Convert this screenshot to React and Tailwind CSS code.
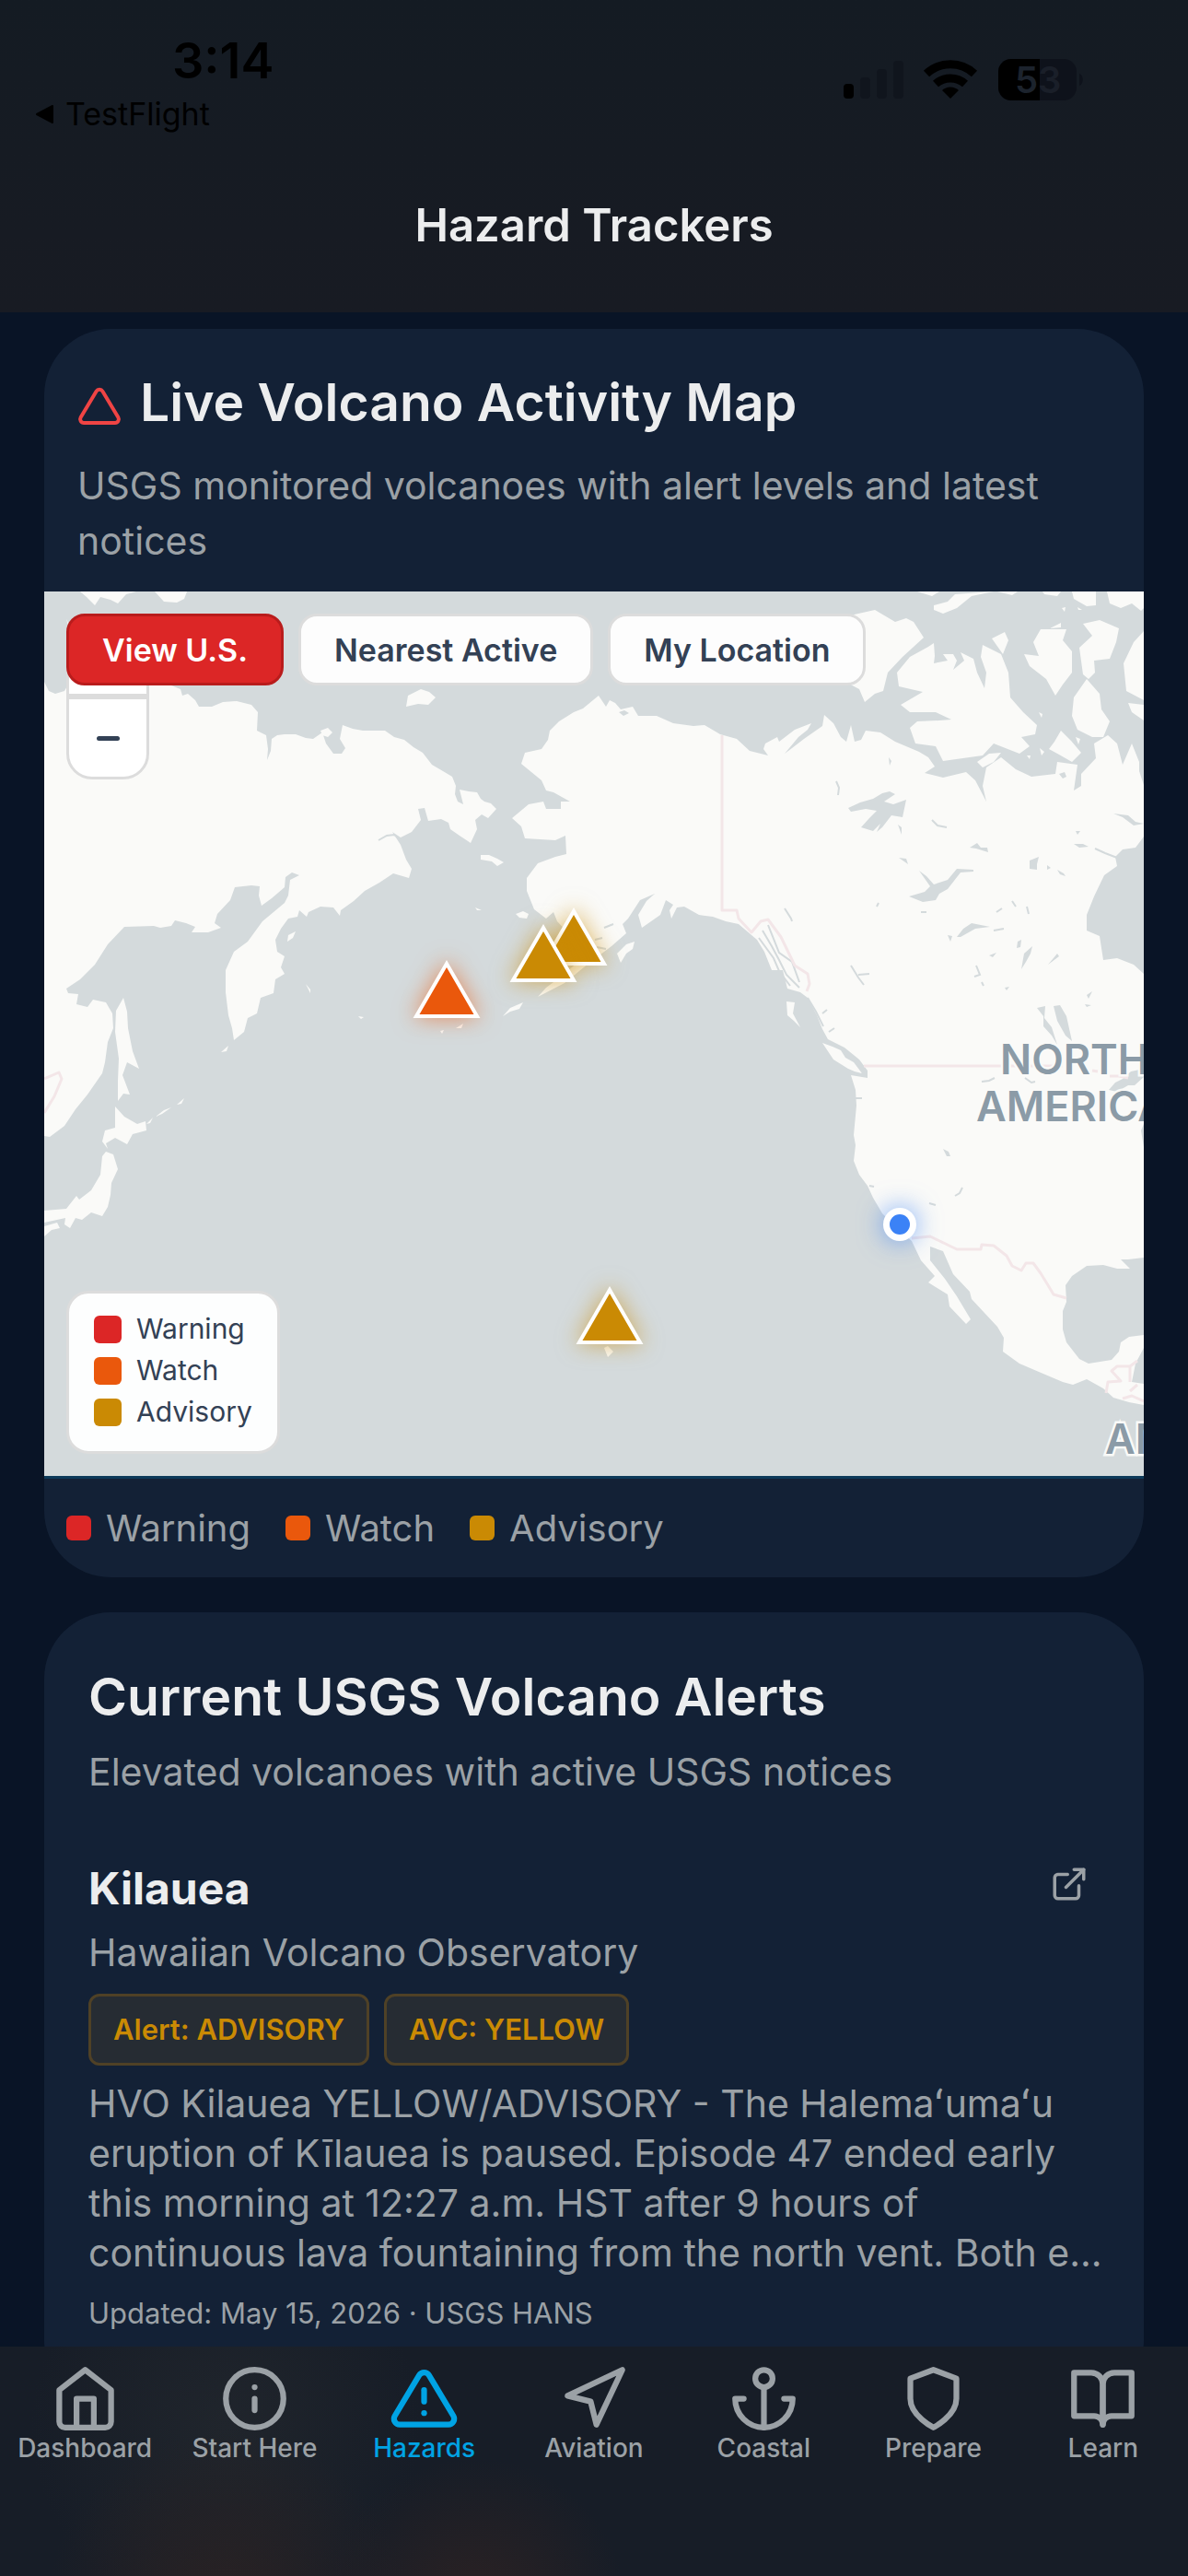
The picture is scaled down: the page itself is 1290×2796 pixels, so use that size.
import { useState } from "react";
import {
  FiAlertTriangle,
  FiAnchor,
  FiBookOpen,
  FiExternalLink,
  FiHome,
  FiInfo,
  FiNavigation,
  FiShield,
  FiTriangle,
} from "react-icons/fi";

const LEVELS = [
  { label: "Warning", swatch: "bg-[#dc2626]" },
  { label: "Watch", swatch: "bg-[#ea580c]" },
  { label: "Advisory", swatch: "bg-[#ca8a04]" },
];

const VIEWS = ["View U.S.", "Nearest Active", "My Location"];

const TABS = [
  { label: "Dashboard", icon: FiHome },
  { label: "Start Here", icon: FiInfo },
  { label: "Hazards", icon: FiAlertTriangle },
  { label: "Aviation", icon: FiNavigation },
  { label: "Coastal", icon: FiAnchor },
  { label: "Prepare", icon: FiShield },
  { label: "Learn", icon: FiBookOpen },
];

const VOLCANOES = [
  { id: "great-sitkin", x: 437, y: 399, fill: "#ea580c", glow: "drop-shadow-[0_0_12px_rgba(234,88,12,0.6)]" },
  { id: "spurr", x: 575, y: 342, fill: "#ca8a04", glow: "drop-shadow-[0_0_12px_rgba(202,138,4,0.6)]" },
  { id: "shishaldin", x: 542, y: 360, fill: "#ca8a04", glow: "drop-shadow-[0_0_12px_rgba(202,138,4,0.6)]" },
  { id: "kilauea", x: 614, y: 753, fill: "#ca8a04", glow: "drop-shadow-[0_0_12px_rgba(202,138,4,0.6)]" },
];

const LAND = [
  // Siberia and Kamchatka
  "M0 98 5 108 12 111 22 108 26 101 30 50 24 30 40 60 90 90 138 102 148 106 150 113 156 111 164 118 168 125 182 125 194 120 209 119 225 123 232 131 231 151 241 156 243 171 242 183 246 173 247 160 253 156 261 155 273 155 284 159 292 160 302 153 306 165 314 176 323 176 327 170 321 160 324 145 335 149 346 151 370 151 380 158 391 161 401 169 411 175 421 188 433 195 443 201 447 211 446 220 449 228 455 231 451 215 461 217 470 218 474 225 478 228 485 230 491 236 482 246 475 242 468 248 470 258 463 273 451 265 441 258 439 251 431 247 417 249 413 235 406 236 409 248 399 261 387 267 378 261 387 275 393 291 399 301 396 311 379 306 364 316 348 325 336 336 322 346 321 352 314 343 300 342 287 348 285 353 277 346 275 353 265 355 257 366 251 378 253 391 261 396 257 408 261 415 251 421 249 436 235 441 231 458 221 463 217 478 206 487 204 474 200 460 197 435 197 411 206 391 221 380 237 358 261 338 265 330 267 313 277 308 269 305 262 310 261 321 247 333 236 341 233 330 234 320 225 319 207 321 202 335 188 350 185 360 192 365 178 370 160 370 164 364 154 360 142 357 138 363 126 365 119 363 87 364 69 383 55 405 39 421 24 431 26 436 37 437 35 448 47 451 53 443 67 446 74 458 75 474 69 489 66 511 63 523 47 546 34 562 22 580 6 592 0 591Z",
  // Sakhalin, Hokkaido, Honshu, Shikoku
  "M78 455 86 441 90 456 91 474 96 499 103 518 90 511 85 525 93 546 86 545 80 553 80 531 81 507 77 478Z",
  "M77 559 87 570 101 578 110 575 111 585 96 589 90 600 77 593 67 599 69 605 63 597 66 585 77 582Z",
  "M67 608 75 611 80 627 73 642 72 655 69 668 63 678 51 674 41 682 34 680 28 691 22 687 23 680 0 685 0 672 24 670 35 656 38 660 51 650 61 633 63 613Z",
  "M0 689 14 685 17 691 8 693 0 700Z",
  "M192 500 200 493 198 499ZM111 578 118 571 115 577ZM121 570 130 563 138 560 128 567ZM144 557 152 550 149 556Z",
  // Arctic coast islands
  "M39 0 46 6 55 15 61 6 72 9 80 13 89 3 100 0ZM120 0 130 11 144 12 152 8 155 0Z",
  "M393 125 395 113 409 106 418 109 425 115 417 123 406 122ZM300 151 308 148 313 153 308 158 302 156Z",
  // Bering Sea islands
  "M474 286 483 286 492 290 499 294 492 298 486 293 474 291ZM512 350 520 347 526 350 524 355 516 354ZM265 373 273 369 270 376 264 380ZM284 426 289 432 289 436ZM341 461 347 462 344 464ZM468 343 475 346 470 346Z",
  "M498 461 506 452 520 446 516 453 506 456ZM447 474 455 469 453 474ZM430 477 434 476 432 480Z",
  // North America
  "M602 113 610 125 614 118 620 121 626 128 639 125 645 135 665 135 683 143 705 146 717 145 734 155 752 160 766 173 786 178 781 171 783 165 796 158 798 163 815 150 833 143 829 150 819 158 804 176 812 170 825 160 845 146 847 134 857 143 865 158 871 163 876 145 880 163 887 161 892 151 908 153 924 163 950 174 960 180 967 190 956 197 976 202 1001 196 1011 205 1023 228 1019 211 1023 191 1039 180 1055 193 1072 201 1098 198 1100 185 1122 188 1118 216 1126 211 1126 198 1142 181 1140 165 1155 156 1165 165 1171 188 1181 165 1189 185 1189 195 1194 210V266L1185 278 1171 280 1163 288 1165 298 1151 308 1140 331 1132 351 1132 368 1146 374 1150 400 1165 398 1183 405 1194 415V723L1177 725 1169 725 1179 735 1165 735 1150 731 1132 732 1116 743 1109 753 1110 771 1106 781 1106 801 1110 815 1124 833 1134 838 1159 834 1167 825 1169 815 1178 809 1194 807V821L1185 838 1181 858 1194 860V883L1178 880 1161 875 1150 865 1132 855 1117 861 1106 858 1080 847 1059 838 1041 825 1042 810 1035 798 1007 768 1005 760 987 741 976 716 962 711 962 726 978 746 991 765 1006 790 1001 795 983 776 981 763 960 750 967 743 952 726 942 705 925 690 910 675 900 658 894 645 885 633 879 618 881 601 879 590 882 558 881 541 876 525 894 528 894 520 885 508 869 495 851 486 845 475 839 460 829 441 821 435 807 431 802 411 790 411 782 391 774 378 754 361 740 358 726 353 711 351 695 342 687 343 681 355 679 346 683 340 675 335 669 351 649 365 645 351 654 336 663 328 647 335 634 355 628 361 632 371 616 385 592 403 565 425 536 440 545 430 557 421 585 398 573 375 557 358 553 348 545 355 532 345 524 325 524 311 536 295 555 288 567 285 566 265 555 270 522 268 518 255 508 246 526 231 542 228 545 236 561 236 561 228 571 228 553 218 545 216 540 205 518 187 522 175 540 171 547 161 549 151 559 141 575 131 585 127Z",
  // Banks and Victoria islands
  "M875 26 902 20 924 33 936 29 944 33 955 50 932 71 916 88 911 108 902 111 891 120 885 106 870 98Z",
  "M966 56 967 70 966 78 981 75 976 68 987 68 991 75 987 85 999 75 995 66 1009 73 1013 88 1021 105 1023 88 1017 71 1019 58 1039 68 1047 88 1049 115 1063 131 1078 145 1076 155 1061 158 1070 168 1059 176 1031 165 1019 178 976 184 968 168 946 165 940 148 948 141 972 140 985 139 968 131 940 131 930 123 954 109 928 103 926 88 940 71 960 60Z",
  "M1029 51 1043 44 1047 53 1041 68ZM1064 68 1080 70 1074 55 1082 41 1110 41 1106 53 1116 65 1116 88 1106 101 1098 113 1088 95 1070 81ZM1092 40 1104 34 1104 39Z",
  // Somerset, Boothia, King William
  "M1128 35 1146 31 1167 40 1164 55 1157 73 1140 75 1141 88 1134 95 1128 90 1124 61 1138 48ZM1132 95 1146 111 1148 128 1157 141 1150 158 1138 158 1122 150 1116 135 1118 115Z",
  "M1091 171 1097 163 1104 151 1115 162 1126 175 1116 185 1102 177ZM1194 43 1183 55 1172 78 1175 108 1194 118ZM1177 121 1194 123V140L1181 131Z",
  "M966 15 981 11 989 3 1031 0 1007 5 991 18 976 24 966 20ZM948 0H972L964 5ZM1035 0H1057L1051 4ZM1084 0H1104L1100 5 1086 3ZM1116 0H1142V15L1132 16 1118 8ZM1154 0H1194V18L1191 21 1181 13 1169 18 1157 13ZM1105 18 1109 17 1108 22ZM1122 17 1127 20 1123 20Z",
  "M1013 185 1026 176 1039 175 1031 185 1019 191ZM1080 131 1084 133 1083 137ZM1081 170 1086 174 1083 178ZM1067 178 1071 178 1070 182ZM1120 158 1125 160 1123 166Z",
  // Kodiak, Haida Gwaii, Vancouver Island, Hawaii
  "M622 393 632 383 641 380 639 388 632 393 626 403ZM806 445 815 446 813 458 821 473 814 466 807 460Z",
  "M845 490 856 494 865 498 870 506 879 511 888 523 880 521 873 518 857 508ZM608 821 612 819 618 825 612 831Z",
].join("");

const LAKES = [
  "M873 235 886 229 900 225 910 219 918 217 924 220 912 228 922 231 936 226 932 245 920 243 910 256 904 261 908 252 900 260 887 256 896 246 904 238 892 236 876 239Z",
  "M950 303 958 309 966 318 981 313 991 301 1009 302 1009 304 995 305 981 323 972 328 968 335 954 337 939 331 956 326 962 320Z",
  "M991 375 998 366 1007 360 1027 364 1011 366 995 375ZM1057 380 1061 378 1060 386 1056 387ZM1061 410 1064 393 1073 385 1071 393 1066 402ZM1090 405 1100 393 1102 396Z",
  "M1096 450 1103 449 1110 461 1116 488 1109 482 1100 466ZM1078 452 1087 450 1086 463 1094 473 1100 492 1094 482 1085 472 1085 461Z",
  "M1070 292 1080 288 1078 296 1078 302 1070 301ZM1089 297 1093 300 1089 302ZM1100 302 1107 306 1109 309 1103 307ZM928 289 936 290 938 296ZM927 253 931 256 931 264ZM917 180 920 184 918 189ZM1013 273 1017 278 1024 278 1025 283 1012 279 1005 278Z",
  "M1118 274 1128 274 1134 277 1124 278ZM1161 241 1177 243 1185 250 1194 252 1183 254 1171 245ZM1120 260 1125 260 1122 264ZM1132 438 1138 434 1134 442ZM1130 448 1137 449 1132 451ZM1043 430 1048 429 1045 433ZM981 373 986 374 984 380ZM1026 395 1034 392 1030 397Z",
  "M976 605 982 608 984 613 980 613ZM1156 541 1163 533 1171 529 1180 521 1194 518V527L1184 536 1177 536 1165 543ZM1191 585 1194 578V603ZM624 131 630 129 635 132 629 135ZM1102 198 1108 196 1110 201 1106 203Z",
].join("");

const STREAMS =
  "M860 206 863 213 862 221M964 248 970 254 980 256M1141 279 1152 284 1165 289M804 344 811 355 812 358M1051 336 1055 342M1067 342 1069 350M904 342 906 338M952 348 958 348M1034 348 1040 344M1031 368 1042 366M876 406 884 419 890 427M884 416 896 415M1012 406 1016 416 1010 418M1018 424 1020 428M780 368 790 385 798 400 806 416 820 430M776 376 792 398 798 412 810 428M786 362 798 392 812 402 820 424M829 441 838 456 846 472M845 458 850 454M852 478 858 474M1018 532 1026 531 1032 528M1065 528 1072 533 1076 532M989 656 994 653 997 647M961 664 968 666M608 365 618 361M598 378 606 376M600 386 610 388M888 550 880 550M896 645 901 646M363 270 372 265 380 264 388 270";

const BORDERS =
  "M736 156V346L752 346 754 355 768 370 778 358 786 356 800 375 815 406 829 415 831 426 828 434M890 515H1106M1138 520 1144 521M1157 526 1167 526 1177 528M942 702 962 700 991 714H1017L1018 709 1031 710 1045 721 1051 732 1061 737 1066 729H1074L1082 740 1090 753 1096 763 1110 767M1153 870 1155 858 1169 857 1159 846 1165 841H1179L1187 835M1179 841V858M1187 861 1179 868M1171 876 1181 873 1194 879M0 529 16 522 19 529 11 548 0 566";

function StatusIcons() {
  return (
    <svg viewBox="0 0 264 48" className="w-[264px] h-12" aria-hidden="true">
      <rect x="3" y="29" width="11" height="16" rx="4" fill="#000" />
      <g fill="#10151d">
        <rect x="21" y="22" width="11" height="23" rx="4" />
        <rect x="39" y="13" width="11" height="32" rx="4" />
        <rect x="57" y="4" width="11" height="41" rx="4" />
      </g>
      <g fill="none" stroke="#000" strokeWidth="9">
        <path d="M93 18a38 38 0 0 1 52 0" />
        <path d="M103 29a24 24 0 0 1 32 0" />
      </g>
      <path d="M119 45 110 36a13 13 0 0 1 18 0Z" fill="#000" />
      <rect x="171" y="2" width="85" height="45" rx="14" fill="#0e121b" />
      <path d="M216 2H185a14 14 0 0 0-14 14v17a14 14 0 0 0 14 14h31Z" fill="#000" />
      <path d="M259 18c5 2 5 11 0 13Z" fill="#0e121b" />
      <text x="189" y="39" className="font-semibold text-[40px]" fill="#1c232d">5</text>
      <text x="214" y="39" className="font-semibold text-[40px]" fill="#1a1f29">3</text>
    </svg>
  );
}

function MapCanvas() {
  return (
    <svg
      viewBox="0 0 1194 960"
      preserveAspectRatio="xMidYMid slice"
      className="block w-full h-[960px] bg-[#d4dadc]"
      role="img"
      aria-label="Map of monitored volcanoes"
    >
      <path d={LAND} fill="#fafaf8" />
      <path d={LAKES} fill="#d4dadc" />
      <path d={STREAMS} fill="none" stroke="#d4dadc" strokeWidth="2" />
      <path d={BORDERS} fill="none" stroke="#f3e6e8" strokeWidth="3" strokeLinejoin="round" />
      <g fill="#8b9ba7" stroke="#fafaf8" strokeWidth="5" paintOrder="stroke" className="text-[45px] font-semibold">
        <text x="1038" y="524">NORTH</text>
        <text x="1012" y="575">AMERICA</text>
        <text x="1152" y="936">AMERICA</text>
      </g>
      {VOLCANOES.map((v) => (
        <g key={v.id} className={v.glow}>
          <path
            d={`M${v.x} ${v.y + 5} ${v.x + 33} ${v.y + 62}H${v.x - 33}Z`}
            fill={v.fill}
            stroke="#fff"
            strokeWidth="4"
          />
        </g>
      ))}
      <g className="drop-shadow-[0_0_14px_rgba(59,130,246,0.7)]">
        <circle cx="929" cy="687" r="18" fill="#fff" />
        <circle cx="929" cy="687" r="11" fill="#3b82f6" />
      </g>
    </svg>
  );
}

function VolcanoMapCard() {
  const [view, setView] = useState("View U.S.");

  return (
    <section className="shrink-0 rounded-[72px] bg-[#132136] overflow-hidden">
      <div className="px-9 pt-11 pb-[25px]">
        <div className="flex items-center gap-5">
          <FiTriangle size={48} className="text-[#ef4444] mt-2" />
          <h2 className="text-[57px] leading-[72px] font-semibold text-[#ecedee]">Live Volcano Activity Map</h2>
        </div>
        <p className="mt-6 text-[41px] leading-[60px] text-[#9ba1a6]">
          USGS monitored volcanoes with alert levels and latest notices
        </p>
      </div>

      <div className="relative border-b-3 border-[#0c3a5a]">
        <MapCanvas />
        <div className="absolute left-6 top-6 w-[90px] h-[180px] rounded-[28px] overflow-hidden border-3 border-[#dcdcdc] bg-white flex flex-col">
          <button type="button" aria-label="Zoom in" className="h-[90px] border-b-6 border-[#dcdcdc] text-[#334155]" />
          <button type="button" aria-label="Zoom out" className="flex-1 flex items-center justify-center">
            <span className="w-[25px] h-[5px] rounded-full bg-[#334155]" />
          </button>
        </div>
        <div className="absolute left-6 top-6 flex gap-4">
          {VIEWS.map((v) => (
            <button
              key={v}
              type="button"
              onClick={() => setView(v)}
              className={`h-[78px] px-9 rounded-[20px] border-3 text-[34px] font-semibold whitespace-nowrap ${
                view === v
                  ? "bg-[#dc2626] border-[#b91c1c] text-white"
                  : "bg-[#fdfdfd] border-[#dcdcdc] text-[#334155]"
              }`}
            >
              {v}
            </button>
          ))}
        </div>
        <ul className="absolute left-6 bottom-6 rounded-[24px] border-3 border-[#dcdcdc] bg-[#fdfefe] px-[27px] pt-4 pb-5">
          {LEVELS.map((l) => (
            <li key={l.label} className="flex items-center gap-4 h-[45px] text-[30px] text-[#334155]">
              <span className={`w-[30px] h-[30px] rounded-md ${l.swatch}`} />
              {l.label}
            </li>
          ))}
        </ul>
      </div>

      <ul className="flex items-center gap-[38px] px-6 h-[107px]">
        {LEVELS.map((l) => (
          <li key={l.label} className="flex items-center gap-4 text-[40px] text-[#9ba1a6]">
            <span className={`w-[27px] h-[27px] rounded-md ${l.swatch}`} />
            {l.label}
          </li>
        ))}
      </ul>
    </section>
  );
}

function AlertBadge({ children }) {
  return (
    <span className="flex items-center h-[78px] px-6 rounded-xl border-3 border-[#4f4126] bg-[#262c33] text-[31px] font-semibold text-[#ca8a04]">
      {children}
    </span>
  );
}

function AlertsCard() {
  return (
    <section className="shrink-0 rounded-[72px] bg-[#132136] pl-12 pr-9 pt-14 pb-20">
      <h2 className="text-[57px] leading-[72px] font-semibold text-[#ecedee]">Current USGS Volcano Alerts</h2>
      <p className="mt-[18px] text-[41px] leading-[54px] text-[#9ba1a6]">Elevated volcanoes with active USGS notices</p>

      <article className="mt-[70px]">
        <div className="flex items-start justify-between pr-6">
          <h3 className="text-[48px] leading-[60px] font-bold text-[#ecedee]">Kilauea</h3>
          <a href="#kilauea" aria-label="Open the Kilauea notice" className="pt-1 text-[#9ba1a6]">
            <FiExternalLink size={42} />
          </a>
        </div>
        <p className="mt-3 text-[41px] leading-[54px] text-[#9ba1a6]">Hawaiian Volcano Observatory</p>
        <div className="mt-[18px] flex gap-4">
          <AlertBadge>Alert: ADVISORY</AlertBadge>
          <AlertBadge>AVC: YELLOW</AlertBadge>
        </div>
        <p className="mt-[14px] text-[41px] leading-[54px] text-[#9ba1a6]">
          HVO Kilauea YELLOW/ADVISORY - The Halemaʻumaʻu eruption of Kīlauea is paused. Episode 47 ended early this
          morning at 12:27 a.m. HST after 9 hours of continuous lava fountaining from the north vent. Both e...
        </p>
        <p className="mt-[18px] text-[31px] leading-[42px] text-[#9ba1a6]">Updated: May 15, 2026 · USGS HANS</p>
      </article>
    </section>
  );
}

export default function App() {
  const [tab, setTab] = useState("Hazards");

  return (
    <div className="h-screen flex flex-col bg-[#091426] font-['Inter','Liberation_Sans',sans-serif]">
      <header className="shrink-0 bg-linear-to-b from-[#141b23] to-[#181b23] pb-16">
        <div className="flex items-start justify-between pl-[37px] pr-[113px] pt-9">
          <div>
            <div className="pl-[150px] text-[54px] leading-[60px] font-semibold text-black">3:14</div>
            <a href="#testflight" className="mt-2 flex items-center gap-3 text-[34px] leading-10 text-black">
              <svg viewBox="0 0 22 22" className="w-[22px] h-[22px]" aria-hidden="true">
                <path d="M20 2v18L3 11Z" fill="#000" stroke="#000" strokeWidth="2" strokeLinejoin="round" />
              </svg>
              TestFlight
            </a>
          </div>
          <div className="pt-[26px]">
            <StatusIcons />
          </div>
        </div>
        <h1 className="mt-[71px] text-center text-[49px] leading-[60px] font-semibold text-[#ecedee]">Hazard Trackers</h1>
      </header>

      <main className="flex-1 min-h-0 overflow-y-auto [scrollbar-width:none] flex flex-col gap-[38px] px-12 pt-[18px]">
        <VolcanoMapCard />
        <AlertsCard />
      </main>

      <nav className="shrink-0 h-[249px] grid grid-cols-7 items-start pt-[19px] bg-[#171d27] bg-[radial-gradient(circle_at_19%_115%,#2a2223_0%,transparent_18%),radial-gradient(circle_at_40%_115%,#2c2223_0%,transparent_20%),radial-gradient(circle_at_19%_35%,#20252c_0%,transparent_20%)]">
        {TABS.map(({ label, icon: Icon }) => (
          <button
            key={label}
            type="button"
            onClick={() => setTab(label)}
            className={`flex flex-col items-center text-[28px] leading-8 font-medium whitespace-nowrap ${
              tab === label ? "text-[#00a3e4]" : "text-[#9ba1a6]"
            }`}
          >
            <Icon size={75} />
            {label}
          </button>
        ))}
      </nav>
    </div>
  );
}
